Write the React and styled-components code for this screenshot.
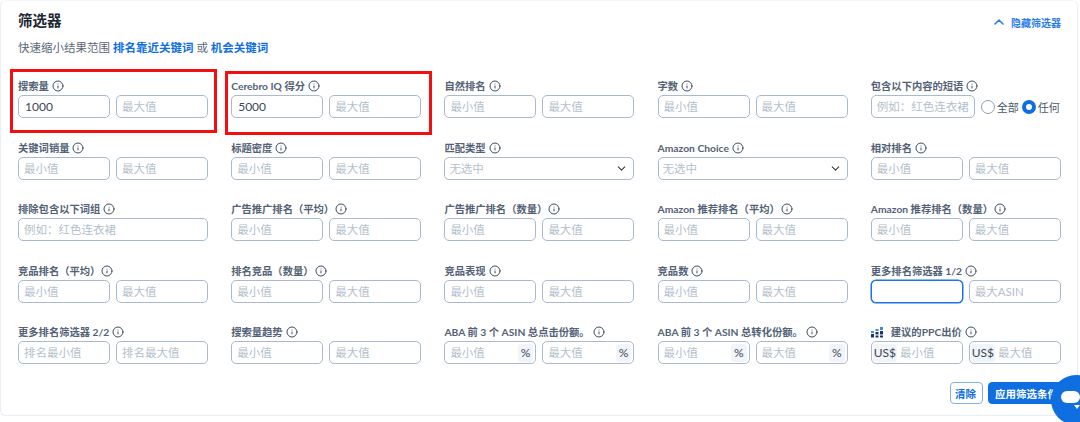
import styled, { createGlobalStyle } from 'styled-components';
import { ChevronUp, ChevronDown, Info } from 'lucide-react';

const GlobalStyle = createGlobalStyle`
  * {
    box-sizing: border-box;
  }
  body {
    margin: 0;
    background: #fff;
    font-family: Lato, "Noto Sans CJK SC", sans-serif;
  }
`;

const Page = styled.div`
  width: 1080px;
  height: 422px;
  overflow: hidden;
  position: relative;
  background: #fff;
`;

const Card = styled.div`
  height: 416px;
  margin-right: 2px;
  padding: 11px 17px 0 17px;
  border: 1px solid #e9edf4;
  border-top-color: #f4f6f9;
  border-radius: 6px;
`;

const Header = styled.div`
  display: flex;
  justify-content: space-between;
  align-items: center;
  height: 18px;
`;

const Title = styled.h2`
  margin: 0;
  font-size: 14.5px;
  line-height: 18px;
  font-weight: 700;
  color: #1c2733;
`;

const Toggle = styled.a`
  display: flex;
  align-items: center;
  gap: 4px;
  margin-top: 2px;
  margin-right: -1px;
  font-size: 10px;
  font-weight: 700;
  color: #2a7de9;
`;

const Hint = styled.p`
  margin: 9px 0 0;
  font-size: 11.5px;
  line-height: 18px;
  color: #5a6878;
`;

const HintLink = styled.a`
  font-weight: 700;
  color: #0f6fe0;
`;

const Grid = styled.div`
  display: grid;
  grid-template-columns: repeat(5, 190px);
  column-gap: 23.2px;
  row-gap: 22.5px;
  margin-top: 22px;
`;

const FieldBox = styled.div`
  position: relative;
  min-width: 0;
`;

const Label = styled.div`
  display: flex;
  align-items: center;
  gap: ${(p) => (p.$wide ? 1 : 3)}px;
  height: 14px;
  margin-bottom: 2px;
  font-size: 10.3px;
  line-height: 14px;
  font-weight: 700;
  color: #536276;
  white-space: nowrap;
`;

const InfoIcon = styled(Info)`
  width: 12px;
  height: 12px;
  color: #3d4c60;
  flex: none;
`;

const Row = styled.div`
  display: flex;
  gap: 6px;
`;

const Shell = styled.div`
  display: flex;
  align-items: center;
  flex: 1 1 0;
  min-width: 0;
  height: 23px;
  padding: 0 2px;
  background: #fff;
  border: 1px solid ${(p) => (p.$focus ? '#1a73e8' : '#a9b9cf')};
  border-radius: 5px;
  box-shadow: ${(p) => (p.$focus ? '0 0 0 0.5px #1a73e8' : 'none')};
`;

const Input = styled.input`
  flex: 1 1 0;
  width: 100%;
  min-width: 0;
  height: 100%;
  padding: 0 0 0 3px;
  border: 0;
  outline: 0;
  background: transparent;
  font: inherit;
  font-size: 11.5px;
  color: #3a4757;
  &::placeholder {
    color: #b3bfcc;
    opacity: 1;
  }
`;

const ValueInput = styled(Input)`
  padding-left: 4px;
  font-size: 12px;
`;

const Addon = styled.span`
  flex: none;
  display: flex;
  align-items: center;
  justify-content: center;
  height: 18px;
  padding: 0 ${(p) => (p.$prefix ? 1 : 3)}px;
  margin-left: ${(p) => (p.$prefix ? -1 : 0)}px;
  border-radius: 3px;
  background: #f1f4f8;
  font-size: 12px;
  color: #3a4757;
`;

const SelectBox = styled(Shell)`
  justify-content: space-between;
  padding: 0 5px 0 4px;
  font-size: 11.5px;
  color: #b3bfcc;
`;

const Arrow = styled(ChevronDown)`
  width: 13px;
  height: 13px;
  color: #2e3b4b;
`;

const PhraseRow = styled.div`
  display: flex;
  align-items: center;
  white-space: nowrap;
`;

const PhraseInput = styled(Shell)`
  flex: none;
  width: 104px;
  margin-right: 6px;
`;

const RadioItem = styled.label`
  display: flex;
  align-items: center;
  gap: 2px;
  margin-right: 3px;
  font-size: 11px;
  color: #47566a;
`;

const RadioMark = styled.span`
  width: 14px;
  height: 14px;
  border-radius: 50%;
  border: ${(p) => (p.$on ? '4px solid #0f6fe0' : '1px solid #8fa0b5')};
  background: #fff;
`;

const Actions = styled.div`
  display: flex;
  justify-content: flex-end;
  gap: 5px;
  margin-top: 18px;
  margin-right: -10px;
`;

const Button = styled.button`
  height: 22px;
  padding: 0 ${(p) => (p.$primary ? 6 : 4)}px;
  width: ${(p) => (p.$primary ? 82 : 33)}px;
  border: 1px solid ${(p) => (p.$primary ? '#0f6fe0' : '#7fb0ee')};
  border-radius: 4px;
  background: ${(p) => (p.$primary ? '#0f6fe0' : '#fff')};
  color: ${(p) => (p.$primary ? '#fff' : '#0f6fe0')};
  font: inherit;
  font-size: 10.5px;
  font-weight: 700;
  text-align: left;
  white-space: nowrap;
  overflow: hidden;
`;

const Marker = styled.div`
  position: absolute;
  top: ${(p) => p.$top}px;
  left: ${(p) => p.$left}px;
  width: 207px;
  height: 64px;
  border: 3px solid #f30f0f;
  pointer-events: none;
`;

const Bubble = styled.div`
  position: absolute;
  left: 1051px;
  top: 375px;
  width: 50px;
  height: 50px;
  border-radius: 50%;
  background: #0f6fe0;
`;

const BubbleBar = styled.div`
  position: absolute;
  left: 10px;
  top: 16px;
  width: 19px;
  height: 12px;
  border-radius: 6px;
  background: #fff;
`;

const BubbleTail = styled.div`
  position: absolute;
  left: 23px;
  top: 30px;
  border-left: 3px solid transparent;
  border-top: 4px solid #fff;
  border-right: 3px solid transparent;
`;

const RangeInputs = ({ min = '最小值', max = '最大值', minValue, focus, unit, prefix }) => (
  <Row>
    <Shell $focus={focus}>
      {prefix && <Addon $prefix>{prefix}</Addon>}
      {minValue ? (
        <ValueInput defaultValue={minValue} />
      ) : (
        <Input placeholder={focus ? '' : min} />
      )}
      {unit && <Addon>{unit}</Addon>}
    </Shell>
    <Shell>
      {prefix && <Addon $prefix>{prefix}</Addon>}
      <Input placeholder={max} />
      {unit && <Addon>{unit}</Addon>}
    </Shell>
  </Row>
);

const Field = ({ label, wide, icon, marker, children }) => (
  <FieldBox>
    <Label $wide={wide}>
      {icon}
      {label}
      <InfoIcon />
    </Label>
    {children}
    {marker && <Marker $top={marker[0]} $left={marker[1]} />}
  </FieldBox>
);

const Select = () => (
  <SelectBox>
    无选中
    <Arrow />
  </SelectBox>
);

const PpcIcon = () => (
  <svg width="12" height="12" viewBox="0 0 12 12" style={{ marginRight: 5 }}>
    <rect x="9" y="1" width="3" height="3" fill="#3d8be0" />
    <rect x="4.5" y="3" width="3" height="2" fill="#3d8be0" />
    <rect x="0" y="5" width="3" height="2" fill="#3d8be0" />
    <g fill="#14386e">
      <rect x="4.5" y="6" width="3" height="2.5" />
      <rect x="9" y="5" width="3" height="3.5" />
      <rect x="0" y="8" width="3" height="3.5" />
      <rect x="4.5" y="9.5" width="3" height="2" />
      <rect x="9" y="9.5" width="3" height="2" />
    </g>
  </svg>
);

const App = () => {
  return (
    <>
      <GlobalStyle />
      <Page>
        <Card>
          <Header>
            <Title>筛选器</Title>
            <Toggle>
              <ChevronUp size={16} strokeWidth={2.4} />
              隐藏筛选器
            </Toggle>
          </Header>
          <Hint>
            快速缩小结果范围 <HintLink>排名靠近关键词</HintLink> 或 <HintLink>机会关键词</HintLink>
          </Hint>
          <Grid>
            <Field label="搜索量" marker={[-10, -8]}>
              <RangeInputs minValue="1000" />
            </Field>
            <Field label="Cerebro IQ 得分" marker={[-8, -6]}>
              <RangeInputs minValue="5000" />
            </Field>
            <Field label="自然排名">
              <RangeInputs />
            </Field>
            <Field label="字数">
              <RangeInputs />
            </Field>
            <Field label="包含以下内容的短语">
              <PhraseRow>
                <PhraseInput>
                  <Input placeholder="例如：红色连衣裙" />
                </PhraseInput>
                <RadioItem>
                  <RadioMark />
                  全部
                </RadioItem>
                <RadioItem>
                  <RadioMark $on />
                  任何
                </RadioItem>
              </PhraseRow>
            </Field>

            <Field label="关键词销量">
              <RangeInputs />
            </Field>
            <Field label="标题密度">
              <RangeInputs />
            </Field>
            <Field label="匹配类型">
              <Select />
            </Field>
            <Field label="Amazon Choice">
              <Select />
            </Field>
            <Field label="相对排名">
              <RangeInputs />
            </Field>

            <Field label="排除包含以下词组">
              <Shell>
                <Input placeholder="例如：红色连衣裙" />
              </Shell>
            </Field>
            <Field label="广告推广排名（平均）" wide>
              <RangeInputs />
            </Field>
            <Field label="广告推广排名（数量）" wide>
              <RangeInputs />
            </Field>
            <Field label="Amazon 推荐排名（平均）" wide>
              <RangeInputs />
            </Field>
            <Field label="Amazon 推荐排名（数量）" wide>
              <RangeInputs />
            </Field>

            <Field label="竞品排名（平均）" wide>
              <RangeInputs />
            </Field>
            <Field label="排名竞品（数量）" wide>
              <RangeInputs />
            </Field>
            <Field label="竞品表现">
              <RangeInputs />
            </Field>
            <Field label="竞品数">
              <RangeInputs />
            </Field>
            <Field label="更多排名筛选器 1/2">
              <RangeInputs focus max="最大ASIN" />
            </Field>

            <Field label="更多排名筛选器 2/2">
              <RangeInputs min="排名最小值" max="排名最大值" />
            </Field>
            <Field label="搜索量趋势">
              <RangeInputs />
            </Field>
            <Field label="ABA 前 3 个 ASIN 总点击份额。">
              <RangeInputs unit="%" />
            </Field>
            <Field label="ABA 前 3 个 ASIN 总转化份额。">
              <RangeInputs unit="%" />
            </Field>
            <Field label="建议的PPC出价" icon={<PpcIcon />}>
              <RangeInputs prefix="US$" />
            </Field>
          </Grid>
          <Actions>
            <Button>清除</Button>
            <Button $primary>应用筛选条件</Button>
          </Actions>
        </Card>
        <Bubble>
          <BubbleBar />
          <BubbleTail />
        </Bubble>
      </Page>
    </>
  );
};

export default App;
